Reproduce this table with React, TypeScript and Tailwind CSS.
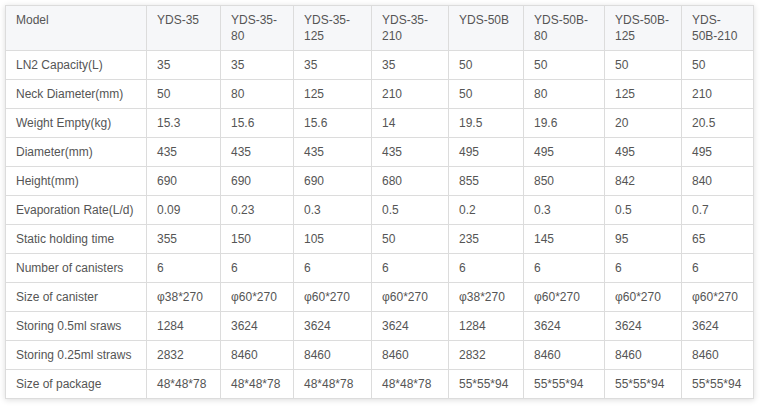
const models = [
  "YDS-35",
  "YDS-35-80",
  "YDS-35-125",
  "YDS-35-210",
  "YDS-50B",
  "YDS-50B-80",
  "YDS-50B-125",
  "YDS-50B-210",
]

const widths = [141, 74, 73, 78, 77, 75, 81, 77, 72]

const rows: [string, string[]][] = [
  ["LN2 Capacity(L)", ["35", "35", "35", "35", "50", "50", "50", "50"]],
  ["Neck Diameter(mm)", ["50", "80", "125", "210", "50", "80", "125", "210"]],
  ["Weight Empty(kg)", ["15.3", "15.6", "15.6", "14", "19.5", "19.6", "20", "20.5"]],
  ["Diameter(mm)", ["435", "435", "435", "435", "495", "495", "495", "495"]],
  ["Height(mm)", ["690", "690", "690", "680", "855", "850", "842", "840"]],
  ["Evaporation Rate(L/d)", ["0.09", "0.23", "0.3", "0.5", "0.2", "0.3", "0.5", "0.7"]],
  ["Static holding time", ["355", "150", "105", "50", "235", "145", "95", "65"]],
  ["Number of canisters", ["6", "6", "6", "6", "6", "6", "6", "6"]],
  ["Size of canister", ["φ38*270", "φ60*270", "φ60*270", "φ60*270", "φ38*270", "φ60*270", "φ60*270", "φ60*270"]],
  ["Storing 0.5ml sraws", ["1284", "3624", "3624", "3624", "1284", "3624", "3624", "3624"]],
  ["Storing 0.25ml straws", ["2832", "8460", "8460", "8460", "2832", "8460", "8460", "8460"]],
  ["Size of package", ["48*48*78", "48*48*78", "48*48*78", "48*48*78", "55*55*94", "55*55*94", "55*55*94", "55*55*94"]],
]

export default function App() {
  return (
    <div className="w-[760px] h-[406px] bg-white pt-[5px] pl-[5px] font-['Liberation_Sans',Arial,sans-serif]">
      <table className="w-[748px] table-fixed border-collapse text-[12px] leading-[16px] text-[#555] shadow-[0_1px_6px_rgba(0,0,0,0.14)]">
        <colgroup>
          {widths.map((w, i) => (
            <col key={i} style={{ width: w }} />
          ))}
        </colgroup>
        <thead>
          <tr className="h-[45px] bg-[#f6f7f9]">
            <th className="border border-[#dcdcdc] px-[10px] pt-[6px] align-top text-left font-normal">Model</th>
            {models.map((m) => (
              <th key={m} className="border border-[#dcdcdc] px-[10px] pt-[6px] align-top text-left font-normal">
                {m}
              </th>
            ))}
          </tr>
        </thead>
        <tbody>
          {rows.map(([label, vals]) => (
            <tr key={label} className="h-[29px] bg-white">
              <td className="border border-[#dcdcdc] px-[10px] align-middle whitespace-nowrap">{label}</td>
              {vals.map((v, i) => (
                <td key={i} className="border border-[#dcdcdc] px-[10px] align-middle whitespace-nowrap">
                  {v}
                </td>
              ))}
            </tr>
          ))}
        </tbody>
      </table>
    </div>
  )
}
